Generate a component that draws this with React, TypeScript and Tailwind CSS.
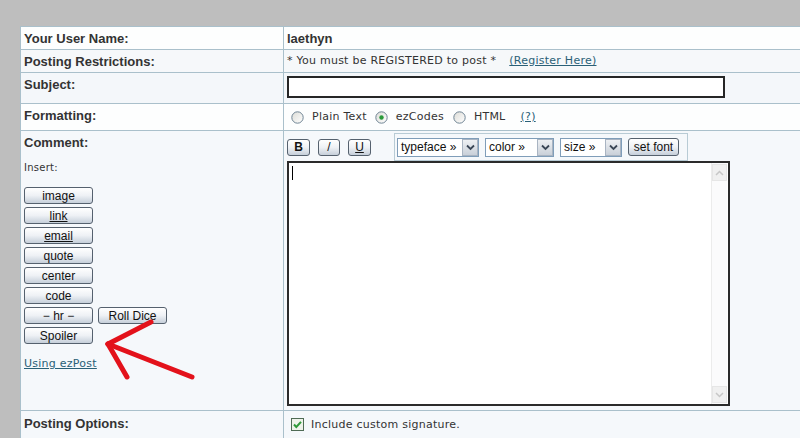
import React from "react";

const V = "font-['DejaVu_Sans','Verdana',sans-serif] tracking-[0.25px]";
const A = "font-['Liberation_Sans','Arial',sans-serif]";

function Btn({ children, className = "" }: { children: React.ReactNode; className?: string }) {
  return (
    <div
      className={`h-[17px] border border-[#55616e] rounded-[3px] bg-gradient-to-b from-[#ffffff] via-[#eef1f5] to-[#c6cfda] text-[12px] ${A} text-[#111] leading-none flex items-center justify-center ${className}`}
    >
      {children}
    </div>
  );
}

function Radio({ checked = false }: { checked?: boolean }) {
  return (
    <svg width="13" height="13" viewBox="0 0 13 13" className="shrink-0">
      <defs>
        <linearGradient id="rg" x1="0" y1="0" x2="1" y2="1">
          <stop offset="0" stopColor="#dcdcd6" />
          <stop offset="1" stopColor="#ffffff" />
        </linearGradient>
      </defs>
      <circle cx="6.5" cy="6.5" r="5.7" fill="url(#rg)" stroke="#6f8494" strokeWidth="1" />
      {checked && <circle cx="6.5" cy="6.5" r="2.2" fill="#2b9a3a" />}
    </svg>
  );
}

function Select({ label, w }: { label: string; w: string }) {
  return (
    <div className={`h-[19px] ${w} border border-[#7f9db9] bg-white flex items-center`}>
      <span className={`flex-1 pl-[3px] text-[12px] ${A} text-[#111] leading-none`}>{label}</span>
      <div className="w-[16px] h-[17px] border border-[#a9b4c2] bg-gradient-to-b from-[#eef0f3] to-[#c9d0d9] flex items-center justify-center">
        <svg width="9" height="7" viewBox="0 0 9 7">
          <path d="M1 1.5 L4.5 5 L8 1.5" fill="none" stroke="#3a4656" strokeWidth="1.8" />
        </svg>
      </div>
    </div>
  );
}

const label = `${A} font-bold text-[13px] text-[#333] leading-[15px]`;

export default function App() {
  return (
    <div className="w-[800px] h-[438px] overflow-hidden bg-[#bebebe] pl-[20px] pt-[26px] relative">
      <div className="w-[800px] border-t border-l border-[#aac0cb] bg-white">
        {/* Row 1 */}
        <div className="flex h-[23px] border-b border-[#aac0cb] bg-[#fdfefe]">
          <div className={`w-[263px] border-r border-[#aac0cb] pl-[3px] pt-[4px] ${label}`}>Your User Name:</div>
          <div className={`pl-[3px] pt-[4px] ${label}`}>laethyn</div>
        </div>
        {/* Row 2 */}
        <div className="flex h-[23px] border-b border-[#aac0cb] bg-[#f6f8fa]">
          <div className={`w-[263px] border-r border-[#aac0cb] pl-[3px] pt-[4px] ${label}`}>Posting Restrictions:</div>
          <div className={`pl-[3px] pt-[4px] ${V} text-[11px] text-[#333] leading-[14px] flex`}>
            <span>* You must be REGISTERED to post *</span>
            <span className="ml-[13px] text-[#2a6077] underline">(Register Here)</span>
          </div>
        </div>
        {/* Row 3 */}
        <div className="flex h-[31px] border-b border-[#aac0cb] bg-[#f4f7fa]">
          <div className={`w-[263px] border-r border-[#aac0cb] pl-[3px] pt-[4px] ${label}`}>Subject:</div>
          <div className="pl-[3px] pt-[3px]">
            <div className="w-[438px] h-[22px] border-2 border-[#262626] bg-white" />
          </div>
        </div>
        {/* Row 4 */}
        <div className="flex h-[27px] border-b border-[#aac0cb] bg-[#fdfefe]">
          <div className={`w-[263px] border-r border-[#aac0cb] pl-[3px] pt-[4px] ${label}`}>Formatting:</div>
          <div className={`pl-[7px] flex items-center ${V} text-[11px] text-[#333]`}>
            <Radio />
            <span className="ml-[8px]">Plain Text</span>
            <span className="ml-[8px]"><Radio checked /></span>
            <span className="ml-[8px]">ezCodes</span>
            <span className="ml-[9px]"><Radio /></span>
            <span className="ml-[8px]">HTML</span>
            <span className="ml-[15px] text-[#2a6077] underline">(?)</span>
          </div>
        </div>
        {/* Row 5 */}
        <div className="flex h-[280px] border-b border-[#aac0cb] bg-[#f5f8fb]">
          <div className="w-[263px] border-r border-[#aac0cb] pl-[3px] pt-[4px] flex flex-col">
            <div className={label}>Comment:</div>
            <div className={`mt-[12px] ${V} text-[10px] text-[#333] leading-[12px]`}>Insert:</div>
            <div className="mt-[13px] flex flex-col gap-[3px]">
              <Btn className="w-[69px]">image</Btn>
              <Btn className="w-[69px]"><span className="underline">link</span></Btn>
              <Btn className="w-[69px]"><span className="underline">email</span></Btn>
              <Btn className="w-[69px]">quote</Btn>
              <Btn className="w-[69px]">center</Btn>
              <Btn className="w-[69px]">code</Btn>
              <div className="flex gap-[5px]">
                <Btn className="w-[69px]">− hr −</Btn>
                <Btn className="w-[69px]">Roll Dice</Btn>
              </div>
              <Btn className="w-[69px]">Spoiler</Btn>
            </div>
            <div className={`mt-[14px] ${V} text-[11px] text-[#2a6077] underline leading-[12px]`}>Using ezPost</div>
          </div>
          <div className="pl-[3px] pt-[2px] flex flex-col">
            <div className="flex items-center h-[28px]">
              <Btn className="w-[23px] font-bold">B</Btn>
              <Btn className="w-[22px] ml-[8px]">/</Btn>
              <Btn className="w-[23px] ml-[8px]"><span className="underline">U</span></Btn>
              <div className="ml-[23px] h-[28px] border border-[#b8cbd5] pl-[2px] pr-[8px] flex items-center gap-[6px]">
                <Select label="typeface »" w="w-[82px]" />
                <Select label="color »" w="w-[69px]" />
                <Select label="size »" w="w-[62px]" />
                <Btn className="w-[51px] h-[18px]">set font</Btn>
              </div>
            </div>
            <div className="relative w-[443px] h-[245px] border-2 border-[#2b2b2b] bg-white">
              <div className="absolute left-[3px] top-[3px] w-[1px] h-[14px] bg-black" />
              <div className="absolute right-[1px] top-[0px] bottom-[0px] w-[16px] bg-[#fbfbfc] border-l border-[#ececec] flex flex-col justify-between py-[1px]">
                <div className="h-[17px] w-[15px] border border-[#e6e6e6] bg-[#f0f0f0] flex items-center justify-center">
                  <svg width="9" height="6" viewBox="0 0 9 6"><path d="M1 5 L4.5 1.5 L8 5" fill="none" stroke="#c7c7c7" strokeWidth="1.5" /></svg>
                </div>
                <div className="h-[17px] w-[15px] border border-[#e6e6e6] bg-[#f0f0f0] flex items-center justify-center">
                  <svg width="9" height="6" viewBox="0 0 9 6"><path d="M1 1 L4.5 4.5 L8 1" fill="none" stroke="#c7c7c7" strokeWidth="1.5" /></svg>
                </div>
              </div>
            </div>
          </div>
        </div>
        {/* Row 6 */}
        <div className="flex h-[40px] bg-[#f5f8fb]">
          <div className={`w-[263px] border-r border-[#aac0cb] pl-[3px] pt-[5px] ${label}`}>Posting Options:</div>
          <div className={`pl-[7px] pt-[7px] flex items-start ${V} text-[11px] text-[#333]`}>
            <svg width="13" height="13" viewBox="0 0 13 13" className="shrink-0">
              <rect x="0.5" y="0.5" width="12" height="12" fill="#eef3ea" stroke="#4f6b55" />
              <path d="M3 6.5 L5.3 9 L10 3.8" fill="none" stroke="#2f9a3a" strokeWidth="2" />
            </svg>
            <span className="ml-[7px] leading-[13px]">Include custom signature.</span>
          </div>
        </div>
      </div>
      <svg className="absolute left-0 top-0 pointer-events-none" width="800" height="438">
        <g fill="none" stroke="#e3121b" strokeWidth="5" strokeLinecap="round" strokeLinejoin="round">
          <path d="M192 377 L108 344" />
          <path d="M108 344 L151 322" />
          <path d="M108 344 L127 377" />
        </g>
      </svg>
    </div>
  );
}
